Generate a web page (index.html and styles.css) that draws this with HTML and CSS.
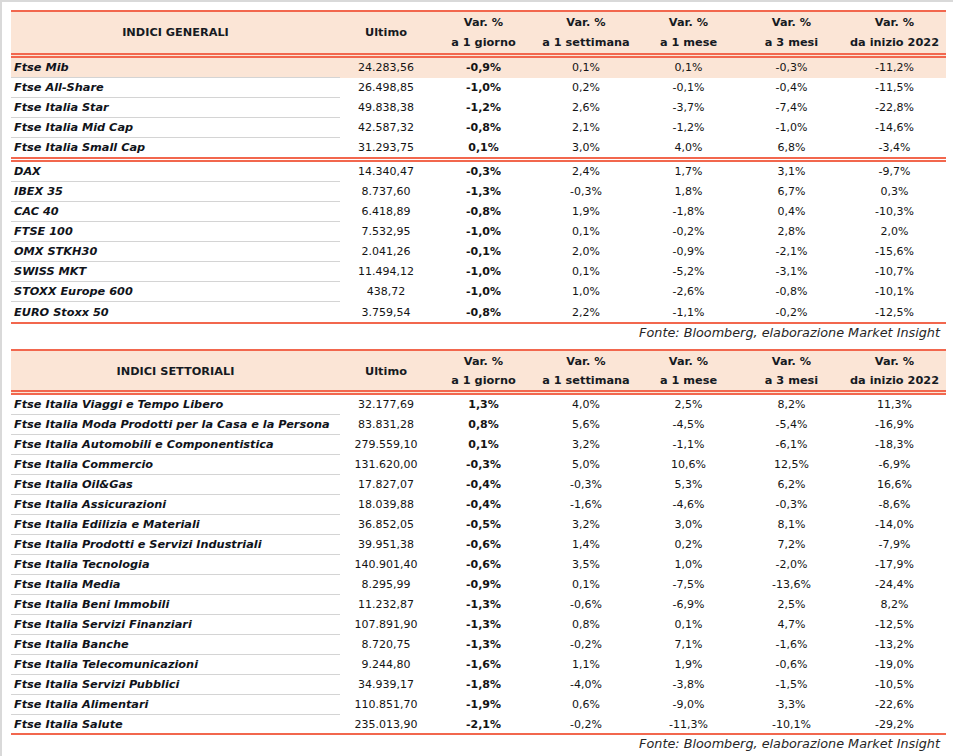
FILE: index.html
```html
<!DOCTYPE html>
<html lang="it">
<head>
<meta charset="utf-8">
<title>Indici</title>
<link rel="stylesheet" href="styles.css">
</head>
<body>
<div class="frame">
  <table class="grid t1">
    <colgroup><col class="c-name"><col class="c-last"><col class="c-var"><col class="c-var2"><col class="c-var"><col class="c-var"><col class="c-var"></colgroup>
    <thead>
      <tr>
        <th class="h-name">INDICI GENERALI</th>
        <th>Ultimo</th>
        <th>Var. %<br>a 1 giorno</th>
        <th>Var. %<br>a 1 settimana</th>
        <th>Var. %<br>a 1 mese</th>
        <th>Var. %<br>a 3 mesi</th>
        <th>Var. %<br>da inizio 2022</th>
      </tr>
    </thead>
    <tbody>
      <tr class="hl"><td class="name">Ftse Mib</td><td>24.283,56</td><td class="day">-0,9%</td><td>0,1%</td><td>0,1%</td><td>-0,3%</td><td>-11,2%</td></tr>
      <tr><td class="name">Ftse All-Share</td><td>26.498,85</td><td class="day">-1,0%</td><td>0,2%</td><td>-0,1%</td><td>-0,4%</td><td>-11,5%</td></tr>
      <tr><td class="name">Ftse Italia Star</td><td>49.838,38</td><td class="day">-1,2%</td><td>2,6%</td><td>-3,7%</td><td>-7,4%</td><td>-22,8%</td></tr>
      <tr><td class="name">Ftse Italia Mid Cap</td><td>42.587,32</td><td class="day">-0,8%</td><td>2,1%</td><td>-1,2%</td><td>-1,0%</td><td>-14,6%</td></tr>
      <tr class="group-end"><td class="name">Ftse Italia Small Cap</td><td>31.293,75</td><td class="day">0,1%</td><td>3,0%</td><td>4,0%</td><td>6,8%</td><td>-3,4%</td></tr>
      <tr><td class="name">DAX</td><td>14.340,47</td><td class="day">-0,3%</td><td>2,4%</td><td>1,7%</td><td>3,1%</td><td>-9,7%</td></tr>
      <tr><td class="name">IBEX 35</td><td>8.737,60</td><td class="day">-1,3%</td><td>-0,3%</td><td>1,8%</td><td>6,7%</td><td>0,3%</td></tr>
      <tr><td class="name">CAC 40</td><td>6.418,89</td><td class="day">-0,8%</td><td>1,9%</td><td>-1,8%</td><td>0,4%</td><td>-10,3%</td></tr>
      <tr><td class="name">FTSE 100</td><td>7.532,95</td><td class="day">-1,0%</td><td>0,1%</td><td>-0,2%</td><td>2,8%</td><td>2,0%</td></tr>
      <tr><td class="name">OMX STKH30</td><td>2.041,26</td><td class="day">-0,1%</td><td>2,0%</td><td>-0,9%</td><td>-2,1%</td><td>-15,6%</td></tr>
      <tr><td class="name">SWISS MKT</td><td>11.494,12</td><td class="day">-1,0%</td><td>0,1%</td><td>-5,2%</td><td>-3,1%</td><td>-10,7%</td></tr>
      <tr><td class="name">STOXX Europe 600</td><td>438,72</td><td class="day">-1,0%</td><td>1,0%</td><td>-2,6%</td><td>-0,8%</td><td>-10,1%</td></tr>
      <tr class="last"><td class="name">EURO Stoxx 50</td><td>3.759,54</td><td class="day">-0,8%</td><td>2,2%</td><td>-1,1%</td><td>-0,2%</td><td>-12,5%</td></tr>
    </tbody>
  </table>
  <p class="source">Fonte: Bloomberg, elaborazione Market Insight</p>

  <table class="grid t2">
    <colgroup><col class="c-name"><col class="c-last"><col class="c-var"><col class="c-var2"><col class="c-var"><col class="c-var"><col class="c-var"></colgroup>
    <thead>
      <tr>
        <th class="h-name">INDICI SETTORIALI</th>
        <th>Ultimo</th>
        <th>Var. %<br>a 1 giorno</th>
        <th>Var. %<br>a 1 settimana</th>
        <th>Var. %<br>a 1 mese</th>
        <th>Var. %<br>a 3 mesi</th>
        <th>Var. %<br>da inizio 2022</th>
      </tr>
    </thead>
    <tbody>
      <tr><td class="name">Ftse Italia Viaggi e Tempo Libero</td><td>32.177,69</td><td class="day">1,3%</td><td>4,0%</td><td>2,5%</td><td>8,2%</td><td>11,3%</td></tr>
      <tr><td class="name">Ftse Italia Moda Prodotti per la Casa e la Persona</td><td>83.831,28</td><td class="day">0,8%</td><td>5,6%</td><td>-4,5%</td><td>-5,4%</td><td>-16,9%</td></tr>
      <tr><td class="name">Ftse Italia Automobili e Componentistica</td><td>279.559,10</td><td class="day">0,1%</td><td>3,2%</td><td>-1,1%</td><td>-6,1%</td><td>-18,3%</td></tr>
      <tr><td class="name">Ftse Italia Commercio</td><td>131.620,00</td><td class="day">-0,3%</td><td>5,0%</td><td>10,6%</td><td>12,5%</td><td>-6,9%</td></tr>
      <tr><td class="name">Ftse Italia Oil&amp;Gas</td><td>17.827,07</td><td class="day">-0,4%</td><td>-0,3%</td><td>5,3%</td><td>6,2%</td><td>16,6%</td></tr>
      <tr><td class="name">Ftse Italia Assicurazioni</td><td>18.039,88</td><td class="day">-0,4%</td><td>-1,6%</td><td>-4,6%</td><td>-0,3%</td><td>-8,6%</td></tr>
      <tr><td class="name">Ftse Italia Edilizia e Materiali</td><td>36.852,05</td><td class="day">-0,5%</td><td>3,2%</td><td>3,0%</td><td>8,1%</td><td>-14,0%</td></tr>
      <tr><td class="name">Ftse Italia Prodotti e Servizi Industriali</td><td>39.951,38</td><td class="day">-0,6%</td><td>1,4%</td><td>0,2%</td><td>7,2%</td><td>-7,9%</td></tr>
      <tr><td class="name">Ftse Italia Tecnologia</td><td>140.901,40</td><td class="day">-0,6%</td><td>3,5%</td><td>1,0%</td><td>-2,0%</td><td>-17,9%</td></tr>
      <tr><td class="name">Ftse Italia Media</td><td>8.295,99</td><td class="day">-0,9%</td><td>0,1%</td><td>-7,5%</td><td>-13,6%</td><td>-24,4%</td></tr>
      <tr><td class="name">Ftse Italia Beni Immobili</td><td>11.232,87</td><td class="day">-1,3%</td><td>-0,6%</td><td>-6,9%</td><td>2,5%</td><td>8,2%</td></tr>
      <tr><td class="name">Ftse Italia Servizi Finanziari</td><td>107.891,90</td><td class="day">-1,3%</td><td>0,8%</td><td>0,1%</td><td>4,7%</td><td>-12,5%</td></tr>
      <tr><td class="name">Ftse Italia Banche</td><td>8.720,75</td><td class="day">-1,3%</td><td>-0,2%</td><td>7,1%</td><td>-1,6%</td><td>-13,2%</td></tr>
      <tr><td class="name">Ftse Italia Telecomunicazioni</td><td>9.244,80</td><td class="day">-1,6%</td><td>1,1%</td><td>1,9%</td><td>-0,6%</td><td>-19,0%</td></tr>
      <tr><td class="name">Ftse Italia Servizi Pubblici</td><td>34.939,17</td><td class="day">-1,8%</td><td>-4,0%</td><td>-3,8%</td><td>-1,5%</td><td>-10,5%</td></tr>
      <tr><td class="name">Ftse Italia Alimentari</td><td>110.851,70</td><td class="day">-1,9%</td><td>0,6%</td><td>-9,0%</td><td>3,3%</td><td>-22,6%</td></tr>
      <tr class="last"><td class="name">Ftse Italia Salute</td><td>235.013,90</td><td class="day">-2,1%</td><td>-0,2%</td><td>-11,3%</td><td>-10,1%</td><td>-29,2%</td></tr>
    </tbody>
  </table>
  <p class="source">Fonte: Bloomberg, elaborazione Market Insight</p>
</div>
</body>
</html>
```
FILE: styles.css
```css
html, body {
  margin: 0;
  padding: 0;
  background: #ffffff;
}

.frame {
  box-sizing: border-box;
  min-height: 756px;
  border-top: 2px solid #d9d9d9;
  border-left: 2px solid #d9d9d9;
  padding: 8px 0 0 9px;
  font-family: "DejaVu Sans", "Liberation Sans", sans-serif;
  color: #141414;
}

.grid {
  width: 935px;
  table-layout: fixed;
  border-collapse: separate;
  border-spacing: 0;
  font-size: 11px;
}

.c-name { width: 329px; }
.c-last { width: 92px; }
.c-var { width: 103px; }
.c-var2 { width: 102px; }

.grid th {
  box-sizing: content-box;
  background: #fbe5d6;
  border-top: 2px solid #f2674e;
  border-bottom: 5px double #f2674e;
  padding: 1px 0 0;
  font-weight: bold;
  font-size: 11.3px;
  text-align: center;
  color: #161a22;
}

.t1 th {
  height: 40px;
  line-height: 20px;
}

.t2 th {
  height: 38px;
  line-height: 19px;
}

.grid td {
  box-sizing: content-box;
  height: 19px;
  padding: 0;
  line-height: 19px;
  text-align: center;
  border-bottom: 1px solid transparent;
  white-space: nowrap;
  overflow: hidden;
}

.grid td.name {
  text-align: left;
  padding-left: 3px;
  font-size: 11.3px;
  font-weight: bold;
  font-style: italic;
  color: #10131a;
  border-bottom-color: #d4d4d4;
}

.grid td.day {
  font-weight: bold;
}

.grid tr.hl td {
  background: #fbe5d6;
}

.grid tr.group-end td {
  border-bottom: 5px double #f2674e;
}

.grid tr.last td {
  border-bottom: 2px solid #f2674e;
}

.t1 tr.last td {
  height: 20px;
}

.t2 tr.last td {
  height: 16px;
  padding-top: 2px;
  line-height: 16px;
}

.source {
  margin: 0;
  width: 935px;
  box-sizing: border-box;
  padding: 1px 6px 0 0;
  height: 25px;
  text-align: right;
  font-size: 12.8px;
  font-style: italic;
  line-height: 16px;
  color: #262626;
}
```
